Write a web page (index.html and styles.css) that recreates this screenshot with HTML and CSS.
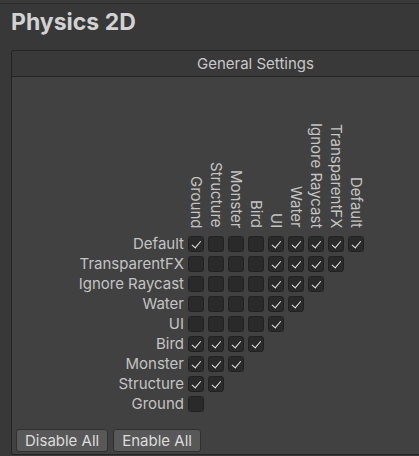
FILE: index.html
```html
<!DOCTYPE html>
<html>
<head>
<meta charset="utf-8">
<link rel="stylesheet" href="styles.css">
</head>
<body>
<div class="topbar"></div>
<h1 class="title">Physics 2D</h1>
<section class="panel">
  <div class="panel-head">General Settings</div>
  <div class="panel-body">
    <div class="matrix">
      <div class="corner"></div>
      <div class="col-label">Ground</div>
      <div class="col-label">Structure</div>
      <div class="col-label">Monster</div>
      <div class="col-label">Bird</div>
      <div class="col-label">UI</div>
      <div class="col-label">Water</div>
      <div class="col-label">Ignore Raycast</div>
      <div class="col-label">TransparentFX</div>
      <div class="col-label">Default</div>

      <div class="row-label">Default</div>
      <span class="cb on"></span><span class="cb"></span><span class="cb"></span><span class="cb"></span><span class="cb on"></span><span class="cb on"></span><span class="cb on"></span><span class="cb on"></span><span class="cb on"></span>

      <div class="row-label">TransparentFX</div>
      <span class="cb"></span><span class="cb"></span><span class="cb"></span><span class="cb"></span><span class="cb on"></span><span class="cb on"></span><span class="cb on"></span><span class="cb on"></span><span class="fill"></span>

      <div class="row-label">Ignore Raycast</div>
      <span class="cb"></span><span class="cb"></span><span class="cb"></span><span class="cb"></span><span class="cb on"></span><span class="cb on"></span><span class="cb on"></span><span class="fill"></span>

      <div class="row-label">Water</div>
      <span class="cb"></span><span class="cb"></span><span class="cb"></span><span class="cb"></span><span class="cb on"></span><span class="cb on"></span><span class="fill"></span>

      <div class="row-label">UI</div>
      <span class="cb"></span><span class="cb"></span><span class="cb"></span><span class="cb"></span><span class="cb on"></span><span class="fill"></span>

      <div class="row-label">Bird</div>
      <span class="cb on"></span><span class="cb on"></span><span class="cb on"></span><span class="cb on"></span><span class="fill"></span>

      <div class="row-label">Monster</div>
      <span class="cb on"></span><span class="cb on"></span><span class="cb on"></span><span class="fill"></span>

      <div class="row-label">Structure</div>
      <span class="cb on"></span><span class="cb on"></span><span class="fill"></span>

      <div class="row-label">Ground</div>
      <span class="cb"></span><span class="fill"></span>
    </div>
    <div class="buttons">
      <button class="btn">Disable All</button>
      <button class="btn">Enable All</button>
    </div>
  </div>
</section>
</body>
</html>
```

FILE: styles.css
```css
html, body {
  margin: 0;
  padding: 0;
}
body {
  background: #383838;
  width: 419px;
  height: 456px;
  overflow: hidden;
  font-family: Inter, "Noto Sans", sans-serif;
  color: #c4c4c4;
}
.topbar {
  height: 3px;
  border-bottom: 1px solid #2a2a2a;
  background: #3a3a3a;
}
.title {
  margin: 4px 0 0 11px;
  font-size: 23px;
  line-height: 28px;
  font-weight: 700;
  color: #d2d2d2;
  height: 42px;
}
.panel {
  margin-left: 11px;
  width: 420px;
  border: 1px solid #242424;
  border-right: none;
  border-radius: 3px 0 0 3px;
  height: 403px;
  display: flex;
  flex-direction: column;
  overflow: hidden;
}
.panel-head {
  height: 25px;
  line-height: 26px;
  background: #393939;
  border-bottom: 1px solid #242424;
  padding-left: 185px;
  font-size: 15px;
  color: #c8c8c8;
}
.panel-body {
  flex: 1;
  background: #414141;
  display: flex;
  flex-direction: column;
}
.matrix {
  display: grid;
  grid-template-columns: 172px repeat(9, 16px);
  grid-template-rows: 155px repeat(9, 16px);
  column-gap: 4px;
  row-gap: 4px;
}
.col-label {
  writing-mode: vertical-rl;
  font-size: 15px;
  line-height: 16px;
  width: 16px;
  align-self: end;
  padding-bottom: 4px;
  white-space: nowrap;
  color: #c4c4c4;
}
.row-label {
  font-size: 15px;
  line-height: 16px;
  text-align: right;
  white-space: nowrap;
  color: #c4c4c4;
}
.fill { grid-column: auto / -1; }
.cb {
  box-sizing: border-box;
  width: 16px;
  height: 16px;
  background: #2a2a2a;
  border: 1px solid #212121;
  border-radius: 3px;
  position: relative;
}
.cb.on::after {
  content: "";
  position: absolute;
  left: 4.5px;
  top: 1.5px;
  width: 4px;
  height: 7.5px;
  border-right: 1.9px solid #e8e8e8;
  border-bottom: 1.9px solid #e8e8e8;
  transform: rotate(40deg);
}
.buttons {
  display: flex;
  gap: 5px;
  margin-top: 17px;
  padding-left: 4px;
}
.btn {
  font-family: Inter, "Noto Sans", sans-serif;
  font-size: 15px;
  height: 23px;
  padding: 0 8px;
  background: #585858;
  color: #dcdcdc;
  border: 1px solid #303030;
  border-radius: 3px;
  line-height: 21px;
}
```
